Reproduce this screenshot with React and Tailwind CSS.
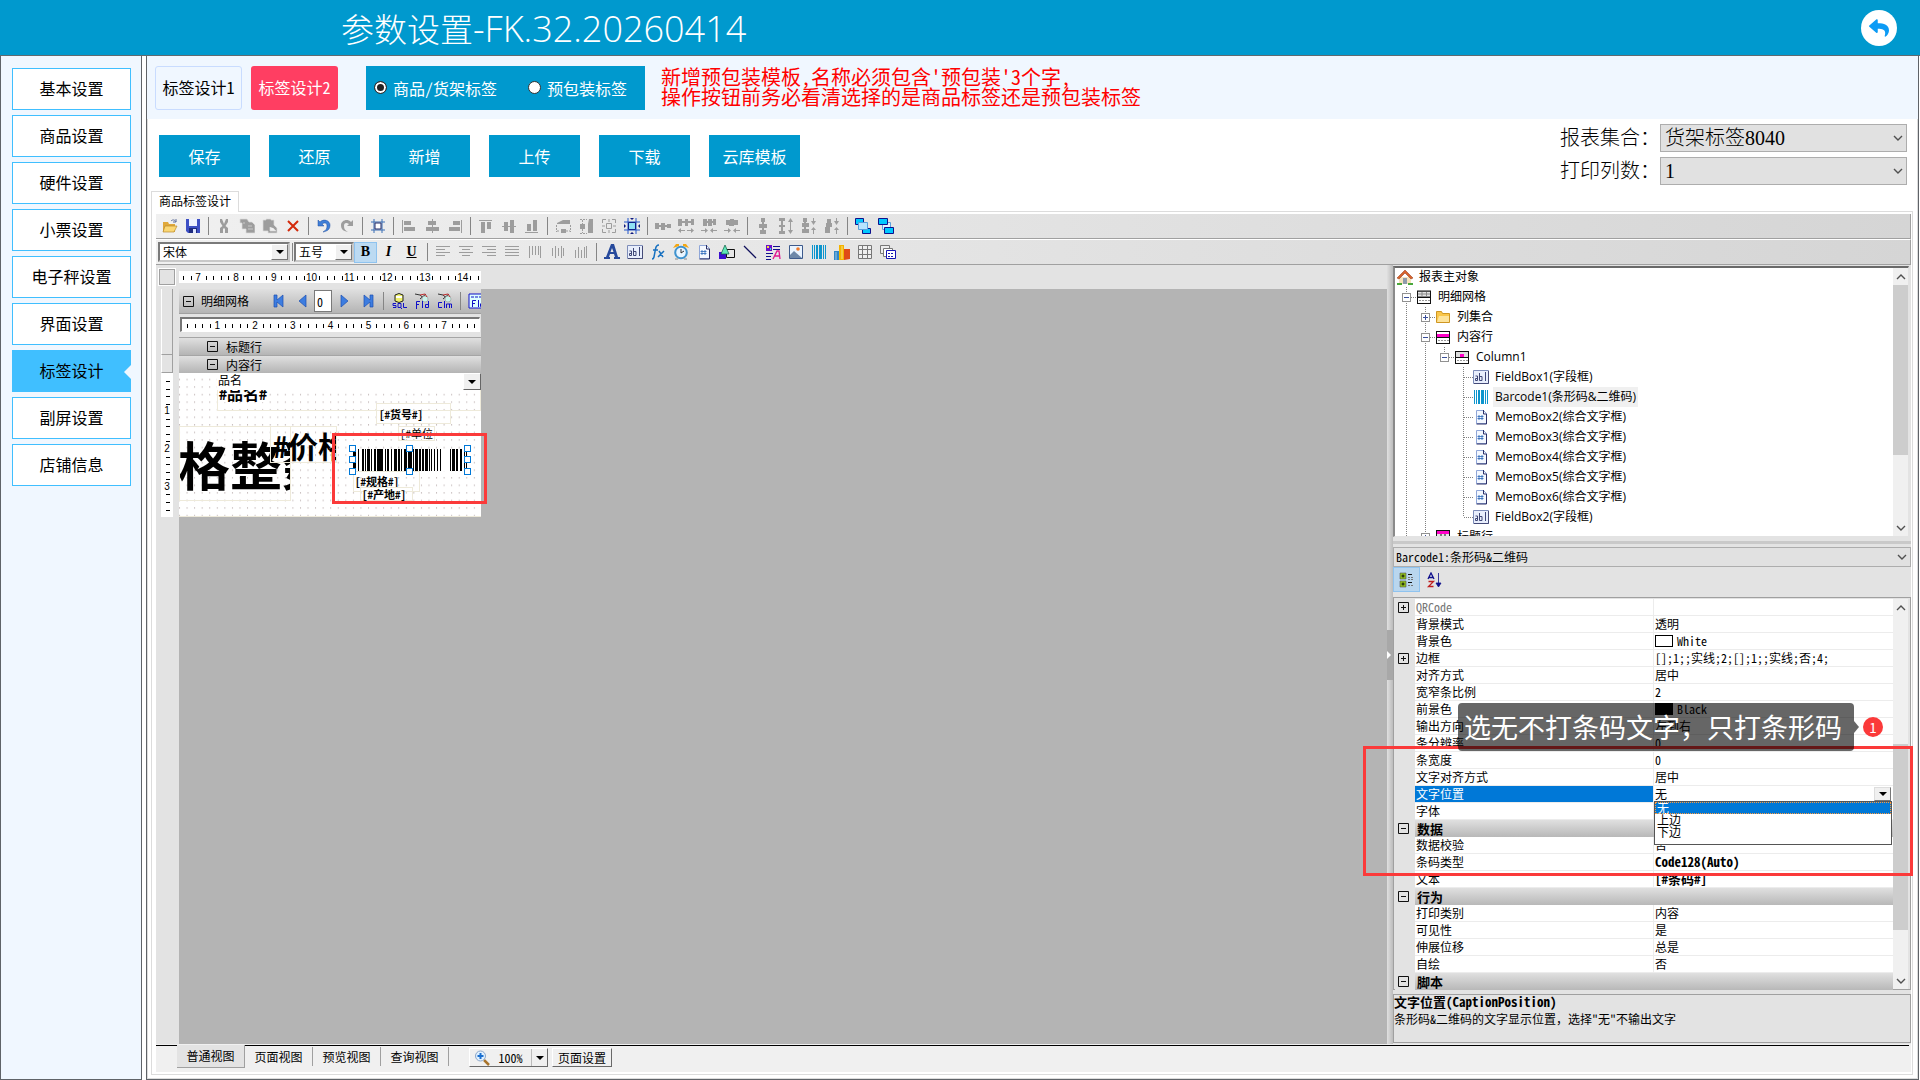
import React, { useState } from 'react';
import { FaReply } from 'react-icons/fa';

const menuItems = [
  '基本设置', '商品设置', '硬件设置', '小票设置', '电子秤设置',
  '界面设置', '标签设计', '副屏设置', '店铺信息',
];

const actions = ['保存', '还原', '新增', '上传', '下载', '云库模板'];

const G = '#9d9d9d';

// 工具栏图标，统一 16x16
const icons = {
  open: (
    <>
      <path d="M1 4h5l1 2h6v8H1z" fill="#e0a83a" />
      <path d="M3 8h12l-3 6H1z" fill="#fbd774" stroke="#b98a2e" strokeWidth=".7" />
      <path d="M9 3c2-2 4-1 5 1M14 1v3h-3" fill="none" stroke="#5f6f9c" />
    </>
  ),
  save: (
    <>
      <path d="M1 1h14v14H3l-2-2z" fill="#3d4fc4" />
      <path d="M4 1h8v7H4z" fill="#eef2ff" />
      <path d="M4 10h8v5H4z" fill="#1d2a7d" />
      <path d="M8 11h3v4H8z" fill="#dfe6ff" />
    </>
  ),
  cut: <path d="M4 1h2l2 5 2-5h2v3L9.500 8l2.500 2v5h-3v-4L8 10l-1 1v4H4v-5l2.500-2L4 4z" fill={G} />,
  copy: <path d="M1 1h7l2 3h3l3 3v8H7v-4H3V5H1zM5 4v2M9 8h4M9 11h5" fill={G} stroke="#ddd" strokeWidth=".7" />,
  paste: <path d="M1 2h3V1h5v1h3v5l3 3v5H6v-2H1zM8 9v4h6l-3-3" fill={G} stroke="#ddd" strokeWidth=".7" />,
  del: <path d="M3 3l10 10M13 3L3 13" stroke="#d42a0b" strokeWidth="2" fill="none" />,
  undo: <path d="M2 2v6h6L6 6c3-2 5-1 5 2s-1 4-4 6c5-1 7-3 7-7S8 0 4 4z" fill="#3f7fd8" stroke="#1d4fa0" strokeWidth=".5" />,
  redo: <path d="M14 2v6H8l2-2c-3-2-5-1-5 2s1 4 4 6c-5-1-7-3-7-7s6-7 10-3z" fill={G} />,
  grid: (
    <>
      <path d="M4 1v14M12 1v14M1 4h14M1 12h14" stroke="#3b6fb5" fill="none" />
      <path d="M5 5h6v6H5z" fill="#fff" stroke="#222a66" />
    </>
  ),
  alLeft: <path d="M1 2h1v13H1zM3 3h7v4H3zM3 9h11v4H3z" fill={G} />,
  alCenter: <path d="M8 1h1v14H8zM4 3h8v4H4zM2 9h13v4H2z" fill={G} />,
  alRight: <path d="M14 2h1v13h-1zM6 3h7v4H6zM2 9h11v4H2z" fill={G} />,
  alTop: <path d="M1 2h13v1H1zM3 4h4v11H3zM9 4h4v7H9z" fill={G} />,
  alMid: <path d="M1 8h14v1H1zM3 4h4v9H3zM9 2h4v13H9z" fill={G} />,
  alBottom: <path d="M1 14h13v1H1zM3 6h4v7H3zM9 2h4v11H9z" fill={G} />,
  sameW: (
    <>
      <path d="M2 5l6-3h7v4H2zM6 11h5v4H6z" fill={G} />
      <path d="M1.500 7v7M15.500 7v7M2 13h3M11 13h4" stroke={G} strokeDasharray="2 1" fill="none" />
    </>
  ),
  sameH: (
    <>
      <path d="M11 1h4v14h-5V6zM2 6h5v5H2z" fill={G} />
      <path d="M2 1.500h7M2 15.500h7M4.500 2v4M4.500 11v4" stroke={G} strokeDasharray="2 1" fill="none" />
    </>
  ),
  sameBoth: (
    <>
      <path d="M5.500 5.500h5v5h-5z" fill="none" stroke={G} />
      <path d="M5 1.500H1.500V5M11 1.500h3.500V5M1.500 11v3.500H5M14.500 11v3.500H11M8 1v3M8 12v3M1 8h3M12 8h3" stroke={G} fill="none" />
    </>
  ),
  fitGrid: (
    <>
      <path d="M4 0v16M12 0v16M0 4h16M0 12h16" stroke="#2456c9" fill="none" />
      <path d="M4.500 4.500h7v7h-7z" fill="#8fe0f5" stroke="#10208a" />
      <path d="M6 0h4L8 2zM6 16h4l-2-2zM0 6v4l2-2zM16 6v4l-2-2z" fill="#101a80" />
    </>
  ),
  hs1: <path d="M0 5h4v2h2V5h4v2h2V6h4v4h-4V9h-2v3H6V9H4v2H0z" fill={G} />,
  hs2: <path d="M0 1h4v2h3V1h3v2h3V1h3v6h-3V5h-3v3H7V5H4v3H0zM3 10v5l-3-2.500zM3 12h4v1H3zM13 10v5l3-2.500zM9 12h4v1H9z" fill={G} />,
  hs3: <path d="M2 1h4v2h1V1h4v2h1V1h3v6h-3V5h-1v3H7V5H6v3H2zM4 10v5l3-2.500zM0 12h4v1H0zM12 10v5l-3-2.500zM12 12h4v1h-4z" fill={G} />,
  hs4: <path d="M2 2h4V1h4v1h4v5h-4v1H5V7H2zM4 10v5l3-2.500zM0 12h4v1H0zM12 10v5l-3-2.500zM12 12h4v1h-4z" fill={G} />,
  vs1: <path d="M6 0h4v4H9v2h3v4H9v2h2v4H5v-4h2v-2H4V6h3V4H6z" fill={G} />,
  vs2: <path d="M1 0h6v3H5v4h2v2H5v4h2v3H1v-3h2V9H1V7h2V3H1zM10 4h5l-2.500-4zM12 4h1v4h-1zM10 12h5l-2.500 4zM12 8h1v4h-1z" fill={G} />,
  vs3: <path d="M2 0h4v4H5v1h3v4H5v2h3v4H1v-4h2V9H1V5h2V4H2zM10 3h5l-2.500 4zM12 0h1v4h-1zM10 12h5l-2.500-3zM12 12h1v4h-1z" fill={G} />,
  vs4: <path d="M3 1h4v4h1v4H6v6H1V9h1V5h1zM10 3h5l-2.500 4zM12 0h1v4h-1zM10 12h5l-2.500-3zM12 12h1v4h-1z" fill={G} />,
  front: (
    <>
      <path d="M.5 .5h8v6h-8zM7.500 10.500h8v5h-8z" fill="#00c8ff" stroke="#10108c" />
      <path d="M3.500 4.500h9v7h-9z" fill="#b8e4ff" stroke="#5aa0dd" />
    </>
  ),
  back: (
    <>
      <path d="M4.500 4.500h8v7h-8z" fill="#dff3ff" stroke="#5aa0dd" />
      <path d="M.5 .5h9v6h-9zM6.500 9.500h9v6h-9z" fill="#00c8ff" stroke="#10108c" />
    </>
  ),
  left: <path d="M1 2.500h14M1 5.500h9M1 8.500h14M1 11.500h9" stroke={G} fill="none" />,
  center: <path d="M1 2.500h14M4 5.500h8M1 8.500h14M4 11.500h8" stroke={G} fill="none" />,
  right: <path d="M1 2.500h14M6 5.500h9M1 8.500h14M6 11.500h9" stroke={G} fill="none" />,
  justify: <path d="M1 2.500h14M1 5.500h14M1 8.500h14M1 11.500h14" stroke={G} fill="none" />,
  vTop: <path d="M2.500 2v12M5.500 2v9M8.500 2v9M11.500 2v9M13.500 2v12" stroke={G} fill="none" />,
  vMid: <path d="M2.500 4v8M5.500 2v12M8.500 4v8M11.500 2v12M13.500 4v8" stroke={G} fill="none" />,
  vBot: <path d="M2.500 6v8M5.500 3v11M8.500 6v8M11.500 3v11M13.500 2v12" stroke={G} fill="none" />,
  letterA: <path d="M7 0h3l4 13h2v2h-6v-2h1l-1-3H6l-1 3h1v2H0v-2h2zM8 4L6.500 8h3z" fill="#274a9c" />,
  field: (
    <>
      <path d="M.5 1.500h15v13H.5z" fill="#e8eefc" stroke="#7d8cb8" />
      <path d="M1 14.500h14.500V2" stroke="#454b78" fill="none" />
      <path d="M2.500 7h2v4.500h-2v-2h2M6.500 4v7.500h2.500v-4H6.500M12.500 3v9" stroke="#3e4675" fill="none" />
    </>
  ),
  fx: <path d="M9 1c-2 0-3 1-3.500 4L4 13c-.3 1.500-1 2-2 2M3 6h5M9 7l4 6M14 7l-6 6" stroke="#1670c0" strokeWidth="1.500" fill="none" />,
  clock: (
    <>
      <path d="M0 4l3-4h3v2zM16 4l-3-4h-3v2z" fill="#f3a712" />
      <circle cx="8" cy="8.500" r="5.800" fill="#eaf5ff" stroke="#3f93cf" strokeWidth="2" />
      <path d="M8 5v4l3-2" stroke="#333" fill="none" />
      <path d="M2 15h3M11 15h3" stroke="#888" />
    </>
  ),
  memo: (
    <>
      <path d="M3.500 1.500h7l3 3v10h-10z" fill="#f4f8ff" stroke="#8fa6d8" />
      <path d="M10.500 1v4h3v10h-10" fill="none" stroke="#2a2f66" />
      <path d="M6 6v5M9 6v5M4.500 7.500h6M4.500 9.500h6" stroke="#2a66b8" strokeWidth=".8" fill="none" />
    </>
  ),
  shape: (
    <>
      <path d="M0 8h7v7H0z" fill="#3a10d0" />
      <path d="M7.500 5.500h8v8h-8z" fill="none" stroke="#111" />
      <path d="M6 1l4 9H2z" fill="#5fe8b8" stroke="#0a5c42" strokeWidth=".7" />
    </>
  ),
  line: <path d="M2 2l12 12" stroke="#10105c" strokeWidth="1.300" fill="none" />,
  rich: (
    <>
      <path d="M1 1h6v6H1z" fill="#6a10c8" />
      <path d="M2 2h2v2H2z" fill="#f5e13a" />
      <path d="M5 4h1v2H5z" fill="#2de0e0" />
      <path d="M8 2.500h7M8 5.500h7M1 9.500h7M1 12.500h5M1 15.500h5" stroke="#10108c" fill="none" />
      <path d="M8 15l4-8h2l1 8M10 12h5" stroke="#e01890" strokeWidth="1.300" fill="none" />
    </>
  ),
  picture: (
    <>
      <path d="M1.500 1.500h13v13h-13z" fill="#eaf4ff" stroke="#3d5a8c" />
      <circle cx="10" cy="5" r="1.800" fill="#f07a2c" />
      <path d="M2 11l4-4 8 7H2z" fill="#6d87a8" />
    </>
  ),
  barcode: <path d="M1 1h1v14H1zM3 1h1v14H3zM5 1h2v14H5zM8 1h3v14H8zM12 1h1v14h-1zM14 1h1v14h-1z" fill="#0d95cd" />,
  chart: (
    <>
      <path d="M0 7h5v9H0z" fill="#2f87c9" />
      <path d="M5 1h5v15H5z" fill="#f4b400" />
      <path d="M10 5h6v10l-6 1z" fill="#e04a16" />
      <path d="M2 8v8M8 2v13" stroke="#fff8" />
    </>
  ),
  table: <path d="M1.500 1.500h13v13h-13zM5.500 2v12M10.500 2v12M1 5.500h14M1 10.500h14" fill="#efefef" stroke="#777" />,
  sub: (
    <>
      <path d="M.5 1.500h9v8h-9z" fill="#eee" stroke="#777" />
      <path d="M3.500 4.500h9v8h-9z" fill="#fff" stroke="#777" />
      <path d="M6.500 6.500h9v8h-9z" fill="#fff" stroke="#1414b4" />
      <path d="M8 9.500h6M8 12.500h6" stroke="#1414b4" strokeDasharray="2 1" />
    </>
  ),
  first: <path d="M3 2h3v5l6-5v12L6 9v5H3z" fill="#3d7de0" stroke="#1c4fb0" strokeWidth=".7" />,
  prev: <path d="M12 2v12L5 8z" fill="#3d7de0" stroke="#1c4fb0" strokeWidth=".7" />,
  next: <path d="M4 2v12l7-6z" fill="#3d7de0" stroke="#1c4fb0" strokeWidth=".7" />,
  last: <path d="M13 2h-3v5L4 2v12l6-5v5h3z" fill="#3d7de0" stroke="#1c4fb0" strokeWidth=".7" />,
  sql: (
    <>
      <path d="M4 2q4-3 8 0v6q-4 3-8 0z" fill="#eef06a" stroke="#222" />
      <path d="M5 3h6v2H5z" fill="#fff" />
      <path d="M5 10.500H2v2h3v2H2M7 10.500h3v4H7zM9 14l2 2M12.500 10v4.500H16" stroke="#1010c8" fill="none" />
    </>
  ),
  fld: (
    <>
      <path d="M1 1l5 1 6 5M12 1L6 6" stroke="#333" fill="none" />
      <circle cx="11" cy="6" r="3" fill="#c9f2ea" stroke="#888" strokeWidth=".5" />
      <path d="M6 2l5-1 2 3" stroke="#c03030" fill="none" />
      <path d="M2.500 16V8.500H6M2 11.500h3M8.500 8v7M14.500 8v6.500h-3v-3h3" stroke="#1010c8" fill="none" />
    </>
  ),
  clm: (
    <>
      <path d="M1 1l5 1 6 5M12 1L6 6" stroke="#333" fill="none" />
      <circle cx="11" cy="6" r="3" fill="#c9f2ea" stroke="#888" strokeWidth=".5" />
      <path d="M6 2l5-1 2 3" stroke="#c03030" fill="none" />
      <path d="M5 9.500H1.500v5H5M7.500 8v7M9.500 15v-4h5v4M12.500 11v4" stroke="#1010c8" fill="none" />
    </>
  ),
  fldBox: (
    <>
      <path d="M1 1h15v14H1z" fill="#dff" stroke="#1010c8" />
      <path d="M3 4h12" stroke="#1010c8" strokeDasharray="3 1" />
      <path d="M4.500 14V7.500H8M4 10.500h3M10.500 7v7M15.500 7v6.500h-3v-3" stroke="#1010c8" fill="none" />
    </>
  ),
  house: (
    <>
      <path d="M2 8h12v7H2z" fill="#f6e3bd" />
      <path d="M0 9l8-8 8 8-2 1-6-6-6 6z" fill="#d8622c" stroke="#8c3510" strokeWidth=".5" />
      <path d="M6 9h4v6H6z" fill="#8f9bab" />
      <path d="M0 14h5v2H0zM11 14h5v2h-5z" fill="#49a83a" />
    </>
  ),
  detail: (
    <>
      <path d="M1.500 2.500h13v5h-13zM1 5h14M6 3v5M10.500 3v5" fill="#e4e4e4" stroke="#888" />
      <path d="M1 2h14M1 8.500h14M1 14.500h14M1.500 2v12M14.500 2v12" stroke="#111" fill="none" />
      <path d="M3 11.500h11" stroke="#999" strokeDasharray="2 1" />
    </>
  ),
  content: (
    <>
      <path d="M1 2h14v13H1z" fill="#fff" />
      <path d="M2 5h12v3H2z" fill="#ff00c8" />
      <path d="M1 2.500h14M1 8.500h14M1 14.500h14M1.500 2v12M14.500 2v12" stroke="#111" fill="none" />
      <path d="M3 11.500h11" stroke="#999" strokeDasharray="2 1" />
    </>
  ),
  header: (
    <>
      <path d="M1 2h14v13H1z" fill="#e4e4e4" />
      <path d="M2 2h12v3H2z" fill="#ff00c8" />
      <path d="M1 1.500h14M1 8.500h14M1 14.500h14M1.500 2v12M14.500 2v12M6 5v3M10 5v3" stroke="#111" fill="none" />
    </>
  ),
  column: (
    <>
      <path d="M1 2h14v13H1z" fill="#ddd" />
      <path d="M6 5h4v3H6z" fill="#ff00c8" />
      <path d="M2 9h12v5H2z" fill="#fff" />
      <path d="M1 2.500h14M1 8.500h14M1 14.500h14M1.500 2v12M14.500 2v12" stroke="#111" fill="none" />
      <path d="M3 11.500h11" stroke="#999" strokeDasharray="2 1" />
    </>
  ),
  folder: (
    <>
      <path d="M1.500 2.500h5l1 2h7v9h-13z" fill="#f9c64a" stroke="#cf9622" />
      <path d="M4 7h10v6H2z" fill="#fde39a" />
    </>
  ),
  category: (
    <>
      <path d="M1 1h6v6H1zM1 9h6v6H1z" fill="#8fbf1a" stroke="#555" strokeWidth=".6" />
      <path d="M2.500 4h3M4 2.500v3M2.500 12h3M4 10.500v3" stroke="#111" />
      <path d="M9 2.500h4M9 10.500h4" stroke="#111" />
      <path d="M9 5.500h5M9 7.500h5M9 13.500h5" stroke="#777" strokeDasharray="2 1" />
    </>
  ),
  sort: (
    <>
      <path d="M2 7l3-6 3 6M3 5.500h4" stroke="#10108c" strokeWidth="1.300" fill="none" />
      <path d="M2.500 9.500h5l-5 5h5" stroke="#c02020" strokeWidth="1.300" fill="none" />
      <path d="M12.500 1v12M10 11h5l-2.500 4z" stroke="#10108c" fill="#10108c" strokeWidth=".8" />
    </>
  ),
  zoom: (
    <>
      <path d="M10 10l5 5" stroke="#a8742c" strokeWidth="2.500" />
      <circle cx="6.500" cy="6" r="5" fill="#dff0ff" stroke="#8aa5c8" />
      <path d="M6.500 3v6M3.500 6h6" stroke="#1a6fd0" strokeWidth="2" />
    </>
  ),
};

const Icon = ({ name }) => (
  <svg viewBox="0 0 16 16" className="w-4 h-4 shrink-0" aria-hidden="true">{icons[name]}</svg>
);

const ToolButton = ({ name }) => (
  <button type="button" aria-label={name} className="w-[23px] h-6 shrink-0 flex items-center justify-center">
    <Icon name={name} />
  </button>
);

const Sep = () => (
  <span className="w-2 shrink-0 flex justify-center">
    <span className="w-px h-[18px] bg-[#858585]" />
  </span>
);

const toolbarTop = [
  ['open', 'save'],
  ['cut', 'copy', 'paste', 'del'],
  ['undo', 'redo'],
  ['grid'],
  ['alLeft', 'alCenter', 'alRight'],
  ['alTop', 'alMid', 'alBottom'],
  ['sameW', 'sameH', 'sameBoth', 'fitGrid'],
  ['hs1', 'hs2', 'hs3', 'hs4'],
  ['vs1', 'vs2', 'vs3', 'vs4'],
  ['front', 'back'],
];

const toolbarBottom = [
  ['left', 'center', 'right', 'justify', 'vTop', 'vMid', 'vBot'],
  ['letterA', 'field', 'fx', 'clock', 'memo', 'shape', 'line', 'rich', 'picture', 'barcode', 'chart', 'table', 'sub'],
];

const Caret = () => (
  <svg viewBox="0 0 8 4" className="w-2 h-1" aria-hidden="true"><path d="M0 0h8L4 4z" fill="#000" /></svg>
);

const Chevron = ({ up }) => (
  <svg viewBox="0 0 10 6" className="w-[10px] h-[6px]" aria-hidden="true">
    <path d={up ? 'M1 5l4-4 4 4' : 'M1 1l4 4 4-4'} fill="none" stroke="#505050" strokeWidth="1.400" />
  </svg>
);

// 老式下拉框（字体 / 字号）
const ClassicSelect = ({ label, value, width }) => (
  <div className={`${width} relative h-5 shrink-0`}>
    <select
      aria-label={label}
      defaultValue={value}
      className="appearance-none block w-full h-5 pl-[3px] bg-white border-2 border-[#7a7a7a] border-r-[#c8c8c8] border-b-[#c8c8c8] text-xs leading-4 outline-none"
    >
      <option>{value}</option>
    </select>
    <span className="absolute right-[2px] top-[2px] w-[17px] h-4 flex items-center justify-center bg-[#f0f0f0] border border-white border-r-[#777] border-b-[#777] pointer-events-none">
      <Caret />
    </span>
  </div>
);

const FlatSelect = ({ id, label, value }) => (
  <div className="flex items-center">
    <label htmlFor={id} className="w-[100px] whitespace-nowrap">{label}</label>
    <div className="relative w-[247px] h-7">
      <select id={id} defaultValue={value} className="appearance-none block w-full h-7 pl-1 bg-[#e1e1e1] border border-[#adadad] leading-6">
        <option>{value}</option>
      </select>
      <span className="absolute right-1 top-[11px] flex pointer-events-none"><Chevron /></span>
    </div>
  </div>
);

const STEP = 7.56;

// 刻度尺：每 5 格一个数字
const Ruler = ({ length, start, labelAt, firstNumber, vertical }) => {
  const marks = [];
  for (let i = 0; start + i * STEP < length - 2; i++) {
    const pos = start + i * STEP;
    const isLabel = i % 5 === labelAt;
    if (isLabel) {
      marks.push(
        <text key={i} x={vertical ? 6 : pos} y={vertical ? pos + 3 : 10} textAnchor="middle" fontSize="10" fontFamily="Liberation Sans, sans-serif">
          {firstNumber + (i - labelAt) / 5}
        </text>
      );
    } else if (vertical) {
      marks.push(<rect key={i} x="5" y={Math.round(pos)} width="4" height="1" />);
    } else {
      marks.push(<rect key={i} x={Math.round(pos)} y="5" width="1" height="4" />);
    }
  }
  return vertical
    ? <svg width="12" height={length} className="bg-white block">{marks}</svg>
    : <svg width={length} height="12" className="bg-white block">{marks}</svg>;
};

const MinusBox = () => (
  <svg viewBox="0 0 11 11" className="w-[11px] h-[11px] shrink-0" aria-hidden="true">
    <path d="M.5 .5h10v10H.5zM3 5.500h5" fill="none" stroke="#111" />
  </svg>
);

const PlusBox = () => (
  <svg viewBox="0 0 11 11" className="w-[11px] h-[11px] shrink-0" aria-hidden="true">
    <path d="M.5 .5h10v10H.5zM3 5.500h5M5.500 3v5" fill="none" stroke="#111" />
  </svg>
);

const bars = [
  [0, 3], [5, 1], [9, 2], [12, 1], [14, 3], [18, 1], [21, 2], [24, 3], [27, 3], [32, 1], [34, 2],
  [38, 1], [41, 3], [45, 2], [48, 1], [51, 3], [55, 4], [60, 1], [62, 3], [66, 2], [69, 2], [72, 3],
  [76, 1], [78, 1], [81, 1], [84, 1], [87, 1], [97, 1], [99, 3], [103, 2], [107, 2], [111, 1], [113, 1],
];

const handles = [0, 57, 115].flatMap((x) => [0, 11, 23].map((y) => [x, y])).filter(([x, y]) => !(x === 57 && y === 11));

const LabelCanvas = () => (
  <div className="relative h-36 w-[302px] bg-white border-b border-[#eeeada]">
    <svg className="absolute inset-0 w-full h-full" aria-hidden="true">
      <defs>
        <pattern id="dots" width={STEP} height={STEP} patternUnits="userSpaceOnUse">
          <rect x="0" y="6" width="1" height="1" fill="#a89898" />
        </pattern>
      </defs>
      <rect width="100%" height="100%" fill="url(#dots)" />
    </svg>
    <div className="absolute left-[38px] top-0 w-[246px] h-[17px] bg-white pl-px text-xs leading-[13px]">品名</div>
    <button type="button" aria-label="展开" className="absolute right-0 top-0 w-[18px] h-[17px] flex items-center justify-center bg-[#f0f0f0] border border-white border-r-[#666] border-b-[#666]">
      <Caret />
    </button>
    <div className="absolute left-[38px] top-[17px] w-[264px] h-[21px] overflow-hidden border border-t-0 border-[#eeeada]">
      <div className="h-3 overflow-hidden flex items-end">
        <span className="bg-white pl-px text-base leading-[18px] font-bold">#品名#</span>
      </div>
    </div>
    <div className="absolute left-[197px] top-[30px] w-[75px] h-[21px] border border-[#eeeada] pl-[2px] text-[11px] leading-5 font-bold whitespace-nowrap">[#货号#]</div>
    <div className="absolute left-[219px] top-[53px] w-[37px] h-[15px] border border-[#eeeada] pl-px text-[11px] leading-3 whitespace-nowrap overflow-hidden">[#单位</div>
    <div className="absolute left-0 top-[53px] w-28 h-[75px] border border-[#eeeada] flex items-center overflow-hidden">
      <span className="-ml-[2px] text-[52px] leading-[72px] font-bold whitespace-nowrap">格整数</span>
    </div>
    <div className="absolute left-[91px] top-[53px] w-[67px] h-[37px] border border-[#eeeada] pl-[2px] text-[30px] leading-9 font-bold whitespace-nowrap overflow-hidden">#价格</div>
    <div className="absolute left-[174px] top-[98px] w-[67px] h-[21px] border border-[#eeeada] pl-px text-[11px] leading-[18px] font-bold whitespace-nowrap">[#规格#]</div>
    <div className="absolute left-[181px] top-[114px] w-[53px] h-[14px] border border-[#eeeada] pl-px text-[11px] leading-3 font-bold whitespace-nowrap">[#产地#]</div>
    <svg viewBox="0 0 122 30" className="absolute left-[170px] top-[72px] w-[122px] h-[30px]" aria-hidden="true">
      <rect x="4" y="4" width="114" height="22" fill="#fff" />
      {bars.map(([x, w]) => <rect key={x} x={x + 4} y="4" width={w} height="22" />)}
      {handles.map(([x, y]) => (
        <rect key={`${x}-${y}`} x={x + 0.5} y={y + 0.5} width="6" height="6" fill="#fff" stroke="#0078d7" />
      ))}
    </svg>
    <div className="absolute left-[153px] top-[60px] w-[155px] h-[71px] border-[3px] border-[#fb3a3a]" />
  </div>
);

const band = 'h-[18px] flex items-center pl-7 gap-2 text-xs leading-4 bg-linear-to-b from-[#e0e0e0] to-[#b4b4b4] border-t border-[#a5a5a5]';

const Designer = () => (
  <section className="flex-1 min-w-0 flex flex-col bg-[#b4b4b4]">
    <div className="h-6 bg-[#e3e3e3] pl-[3px] flex gap-1">
      <div className="w-4 h-4 mt-1 border border-[#a0a0a0] outline outline-white" />
      <div className="pt-[6px]"><Ruler length={302} start={4} labelAt={2} firstNumber={7} /></div>
    </div>
    <div className="flex-1 flex">
      <div className="w-[23px] shrink-0 bg-[#e3e3e3] pl-[5px]">
        <div className="w-3 h-[66px] border-r border-b border-[#a0a0a0] border-l border-l-white" />
        <div className="w-3 h-[18px] border-r border-b border-[#a0a0a0] border-l border-l-white" />
        <Ruler vertical length={144} start={8} labelAt={4} firstNumber={1} />
      </div>
      <div className="w-[302px] shrink-0">
        <div className="h-[25px] flex items-center bg-linear-to-b from-[#e0e0e0] to-[#b4b4b4] border-b border-[#a0a0a0] overflow-hidden">
          <span className="pl-1 flex items-center gap-[7px] text-xs w-[88px] shrink-0"><MinusBox />明细网格</span>
          <ToolButton name="first" />
          <ToolButton name="prev" />
          <input aria-label="页码" defaultValue="0" className="w-[18px] h-[22px] mx-px shrink-0 border border-[#7a7a7a] bg-white pl-[2px] text-xs" />
          <ToolButton name="next" />
          <ToolButton name="last" />
          <Sep />
          <ToolButton name="sql" />
          <ToolButton name="fld" />
          <ToolButton name="clm" />
          <Sep />
          <ToolButton name="fldBox" />
        </div>
        <div className="h-[23px] bg-[#e3e3e3] pt-[3px] px-px">
          <div className="h-[15px] border border-white border-t-2 border-t-[#777] border-l-2 border-l-[#777] bg-white overflow-hidden">
            <Ruler length={298} start={5} labelAt={4} firstNumber={1} />
          </div>
        </div>
        <div className={band}><MinusBox />标题行</div>
        <div className={band}><MinusBox />内容行</div>
        <LabelCanvas />
      </div>
    </div>
  </section>
);

// cells 描述每一级的连线
const tree = [
  { cells: [], icon: 'house', text: '报表主对象' },
  { cells: ['minus'], icon: 'detail', text: '明细网格' },
  { cells: ['line', 'plus'], icon: 'folder', text: '列集合' },
  { cells: ['line', 'minus'], icon: 'content', text: '内容行' },
  { cells: ['line', 'line', 'last'], icon: 'column', text: 'Column1' },
  { cells: ['line', 'line', 'none', 'tee'], icon: 'field', text: 'FieldBox1(字段框)' },
  { cells: ['line', 'line', 'none', 'tee'], icon: 'barcode', text: 'Barcode1(条形码&二维码)', selected: true },
  { cells: ['line', 'line', 'none', 'tee'], icon: 'memo', text: 'MemoBox2(综合文字框)' },
  { cells: ['line', 'line', 'none', 'tee'], icon: 'memo', text: 'MemoBox3(综合文字框)' },
  { cells: ['line', 'line', 'none', 'tee'], icon: 'memo', text: 'MemoBox4(综合文字框)' },
  { cells: ['line', 'line', 'none', 'tee'], icon: 'memo', text: 'MemoBox5(综合文字框)' },
  { cells: ['line', 'line', 'none', 'tee'], icon: 'memo', text: 'MemoBox6(综合文字框)' },
  { cells: ['line', 'line', 'none', 'end'], icon: 'field', text: 'FieldBox2(字段框)' },
  { cells: ['line', 'plus'], icon: 'header', text: '标题行' },
];

const TreeCell = ({ type }) => {
  const dash = { stroke: '#808080', strokeDasharray: '1 1' };
  const box = type === 'plus' || type === 'minus' || type === 'last';
  return (
    <svg viewBox="0 0 19 20" className="w-[19px] h-5 shrink-0" aria-hidden="true">
      {type !== 'none' && <path d={type === 'end' || type === 'last' ? 'M9.500 0v10' : 'M9.500 0v20'} {...dash} />}
      {type !== 'none' && type !== 'line' && <path d="M10 10.500h9" {...dash} />}
      {box && <rect x="5.500" y="6.500" width="8" height="8" fill="#fff" stroke="#919191" />}
      {box && <path d={type === 'plus' ? 'M7 10.500h5M9.500 8v5' : 'M7 10.500h5'} stroke="#3a4f9a" fill="none" />}
    </svg>
  );
};

const ScrollBar = ({ thumb }) => (
  <div className="w-[15px] shrink-0 bg-[#f0f0f0] flex flex-col items-center">
    <span className="h-[17px] flex items-center"><Chevron up /></span>
    <div className="flex-1 w-full"><div className={`${thumb} w-full bg-[#cdcdcd]`} /></div>
    <span className="h-[17px] flex items-center"><Chevron /></span>
  </div>
);

const ObjectTree = () => (
  <div className="h-[271px] flex bg-white border border-t-2 border-l-2 border-[#e3e3e3] border-t-[#696969] border-l-[#8a8a8a] mr-[2px] overflow-hidden">
    <ul className="flex-1 -mt-px pl-[2px] text-xs font-['Open_Sans','Noto_Sans_CJK_SC',sans-serif]">
      {tree.map((node) => (
        <li key={node.text} className="h-5 flex items-center whitespace-nowrap">
          {node.cells.map((type, i) => <TreeCell key={i} type={type} />)}
          <Icon name={node.icon} />
          <span className={`ml-1 px-[2px] leading-5 ${node.selected ? 'bg-[#f0f0f0]' : ''}`}>{node.text}</span>
        </li>
      ))}
    </ul>
    <ScrollBar thumb="h-[170px]" />
  </div>
);

const props = [
  { name: 'QRCode', value: '', expand: true, muted: true },
  { name: '背景模式', value: '透明' },
  { name: '背景色', value: 'White', swatch: 'bg-white' },
  { name: '边框', value: '[];1;;实线;2;[];1;;实线;否;4;', expand: true },
  { name: '对齐方式', value: '居中' },
  { name: '宽窄条比例', value: '2' },
  { name: '前景色', value: 'Black', swatch: 'bg-black' },
  { name: '输出方向', value: '左到右' },
  { name: '条分辨率', value: '0' },
  { name: '条宽度', value: '0' },
  { name: '文字对齐方式', value: '居中' },
  { name: '文字位置', value: '无', active: true },
  { name: '字体', value: '' },
  { name: '数据', group: true },
  { name: '数据校验', value: '否' },
  { name: '条码类型', value: 'Code128(Auto)', bold: true },
  { name: '文本', value: '[#条码#]', bold: true },
  { name: '行为', group: true },
  { name: '打印类别', value: '内容' },
  { name: '可见性', value: '是' },
  { name: '伸展位移', value: '总是' },
  { name: '自绘', value: '否' },
  { name: '脚本', group: true },
];

const PropertyRow = ({ row }) => {
  if (row.group) {
    return (
      <tr>
        <td className="h-[17px] p-0 pl-[3px] bg-[#e3e3e3]"><MinusBox /></td>
        <th colSpan={2} className="h-[17px] p-0 pl-[2px] text-left text-[13px] leading-4 font-bold bg-linear-to-b from-[#e0e0e0] to-[#b8b8b8]">{row.name}</th>
      </tr>
    );
  }
  return (
    <tr>
      <td className="h-[17px] p-0 pl-[3px] bg-[#e3e3e3]">{row.expand && <PlusBox />}</td>
      <th className={`h-[17px] p-0 pl-px text-left font-normal border-b border-r border-[#ececec] ${row.active ? 'bg-[#0078d7] text-white' : 'bg-white'} ${row.muted ? 'text-[#777]' : ''}`}>
        {row.name}
      </th>
      <td className={`h-[17px] p-0 pl-px bg-white border-b border-[#ececec] ${row.bold ? 'font-bold text-[13px]' : ''}`}>
        {row.active ? (
          <span className="flex h-4 items-center">
            <select aria-label={row.name} defaultValue={row.value} className="appearance-none flex-1 h-4 outline-none">
              <option>无</option>
              <option>上边</option>
              <option>下边</option>
            </select>
            <span className="w-[17px] h-[14px] mr-[2px] flex items-center justify-center bg-[#f0f0f0] border border-r-[#777] border-b-[#777] border-[#ddd]"><Caret /></span>
          </span>
        ) : (
          <span className="flex items-center gap-1">
            {row.swatch && <span className={`${row.swatch} w-[18px] h-3 border border-black`} />}
            {row.value}
          </span>
        )}
      </td>
    </tr>
  );
};

const Inspector = () => (
  <aside className="w-[524px] shrink-0 flex bg-[#e3e3e3]">
    <div className="w-[6px] shrink-0 flex items-center bg-linear-to-r from-[#e0e0e0] to-[#bcbcbc]">
      <div className="w-full h-[50px] flex items-center bg-[#a8a8a8]">
        <svg viewBox="0 0 4 8" className="w-1 h-2" aria-hidden="true"><path d="M0 0l4 4-4 4z" fill="#fff" /></svg>
      </div>
    </div>
    <div className="flex-1 min-w-0 pt-px">
      <ObjectTree />
      <div className="h-[10px] pt-1"><div className="h-[3px] bg-[#c9c9c9]" /></div>
      <div className="relative">
        <select aria-label="当前对象" defaultValue="b1" className="appearance-none block w-full h-5 pl-[2px] bg-[#e1e1e1] border border-[#adadad] text-xs leading-4">
          <option value="b1">Barcode1:条形码&amp;二维码</option>
        </select>
        <span className="absolute right-1 top-[7px] flex pointer-events-none"><Chevron /></span>
      </div>
      <div className="h-[30px] flex">
        <button type="button" aria-label="按分类" className="w-[27px] h-[25px] flex items-center justify-center bg-[#b9d6ee] border border-[#8fc3ef]"><Icon name="category" /></button>
        <button type="button" aria-label="按字母" className="w-[27px] h-[25px] flex items-center justify-center"><Icon name="sort" /></button>
      </div>

      <div className="relative border border-[#a0a0a0] h-[393px] pt-px pl-px pr-[2px] flex">
        <table className="flex-1 table-fixed border-separate border-spacing-0 text-xs leading-4 self-start">
          <colgroup>
            <col className="w-5" />
            <col className="w-[239px]" />
            <col />
          </colgroup>
          <tbody>
            {props.map((row) => <PropertyRow key={row.name} row={row} />)}
          </tbody>
        </table>
        <ScrollBar thumb="mt-32 h-[186px]" />

        <ul className="absolute left-[260px] top-[203px] w-[238px] h-11 bg-white border border-[#555] text-xs leading-3">
          <li className="h-3 pl-[2px] bg-[#0078d7] text-white outline-1 -outline-offset-1 outline-dotted outline-[#ff9a3c]">无</li>
          <li className="h-3 pl-[2px]">上边</li>
          <li className="h-3 pl-[2px]">下边</li>
        </ul>
        <div className="absolute -left-[31px] top-[148px] w-[550px] h-[130px] border-[3px] border-[#fb3a3a]" />
        <div className="absolute left-[64px] top-[105px] w-[396px] h-12 rounded bg-black/60 flex items-center pl-[6px] text-[27px] text-white whitespace-nowrap">
          选无不打条码文字，只打条形码
          <svg viewBox="0 0 5 12" className="absolute -right-[5px] top-[18px] w-[5px] h-3" aria-hidden="true"><path d="M0 0l5 6-5 6z" fill="#666" /></svg>
        </div>
        <span className="absolute left-[469px] top-[119px] w-5 h-5 rounded-full bg-[#fb3a3a] text-white text-sm leading-5 text-center">1</span>
      </div>

      <div className="mt-1 h-[49px] border border-[#a0a0a0] text-xs">
        <div className="text-[13px] leading-[14px] font-bold">文字位置(CaptionPosition)</div>
        <div className="leading-5">条形码&amp;二维码的文字显示位置，选择"无"不输出文字</div>
      </div>
    </div>
  </aside>
);

const views = ['普通视图', '页面视图', '预览视图', '查询视图'];

export default function App() {
  const [active, setActive] = useState('标签设计');
  const [kind, setKind] = useState('goods');

  return (
    <div className="min-h-screen flex flex-col bg-white text-black font-['Noto_Sans_Mono_CJK_SC','Noto_Sans_CJK_SC',sans-serif]">
      <header className="h-14 shrink-0 flex items-center justify-between pl-[341px] pr-[23px] bg-[#0099ce] border-b border-[#5f6a70] text-white">
        <h1 className="pt-1 text-[33px] leading-[44px] font-light font-['Open_Sans','Noto_Sans_CJK_SC',sans-serif]">
          参数设置<span className="text-4xl">-FK.32.20260414</span>
        </h1>
        <button type="button" aria-label="返回" className="w-9 h-9 rounded-full bg-white flex items-center justify-center text-[#0c9bf5]">
          <FaReply className="w-5 h-5" />
        </button>
      </header>

      <div className="flex-1 flex gap-1">
        <nav className="w-[142px] shrink-0 flex flex-col gap-[5px] pt-3 pl-[11px] bg-[#f0f7ff] border border-t-0 border-[#5f6368]">
          {menuItems.map((item) => (
            <button
              key={item}
              type="button"
              onClick={() => setActive(item)}
              className={`relative w-[119px] h-[42px] border border-[#40bfff] pb-[2px] text-base ${active === item ? 'bg-[#40bfff]' : 'bg-white'}`}
            >
              {item}
              {active === item && (
                <svg viewBox="0 0 7 14" className="absolute -right-px top-[14px] w-[7px] h-[14px]" aria-hidden="true"><path d="M7 0v14L0 7z" fill="#f0f7ff" /></svg>
              )}
            </button>
          ))}
        </nav>

        <main className="flex-1 min-w-0 mr-px flex flex-col border border-t-0 border-[#5f6368] bg-white">
          <div className="h-[63px] shrink-0 flex items-center pl-2 bg-[#f0f7ff]">
            <button type="button" className="w-[87px] h-11 pb-[2px] rounded-[3px] border border-[#c9dcff]">标签设计1</button>
            <button type="button" className="ml-[9px] w-[87px] h-11 pb-[2px] rounded-[3px] bg-[#ff3e62] text-white">标签设计2</button>
            <div className="ml-7 w-[279px] h-11 flex items-center gap-[31px] pl-2 bg-[#0099ce] text-white whitespace-nowrap">
              <label className="flex items-center gap-[6px]">
                <input type="radio" name="kind" checked={kind === 'goods'} onChange={() => setKind('goods')} className="appearance-none w-[13px] h-[13px] rounded-full border border-[#333] bg-white checked:bg-[#222] checked:shadow-[inset_0_0_0_2px_#fff]" />
                商品/货架标签
              </label>
              <label className="flex items-center gap-[6px]">
                <input type="radio" name="kind" checked={kind === 'packed'} onChange={() => setKind('packed')} className="appearance-none w-[13px] h-[13px] rounded-full border border-[#333] bg-white checked:bg-[#222] checked:shadow-[inset_0_0_0_2px_#fff]" />
                预包装标签
              </label>
            </div>
            <p className="ml-4 pb-[2px] text-xl leading-5 text-[#ff0000]">
              新增预包装模板,名称必须包含'预包装'3个字,<br />
              操作按钮前务必看清选择的是商品标签还是预包装标签
            </p>
          </div>

          <div className="flex-1 flex flex-col pl-[3px] pr-1 pb-[3px] border-x border-b border-[#dcdcdc]">
            <div className="h-[72px] shrink-0 flex justify-between pl-2 pr-[6px]">
              <div className="flex gap-[19px] pt-4">
                {actions.map((text) => (
                  <button key={text} type="button" className="w-[91px] h-[42px] bg-[#0099ce] text-white">{text}</button>
                ))}
              </div>
              <div className="pt-[5px] flex flex-col gap-[5px] text-xl leading-7 font-['Liberation_Serif','Noto_Sans_CJK_SC',serif] font-light">
                <FlatSelect id="report" label="报表集合：" value="货架标签8040" />
                <FlatSelect id="cols" label="打印列数：" value="1" />
              </div>
            </div>

            <div className="self-start w-[88px] h-[21px] -mb-px relative bg-white border border-b-0 border-[#dcdcdc] text-xs leading-[18px] text-center">商品标签设计</div>

            <div className="flex-1 flex flex-col border border-[#dcdcdc] pt-[2px] pl-1 pr-px pb-[2px]">
              <div className="h-[25px] shrink-0 flex items-center pl-[2px] bg-linear-to-r from-[#f0f0f0] to-[#d5d5d5] border-b border-r border-[#a0a0a0]">
                {toolbarTop.map((group, i) => (
                  <React.Fragment key={group[0]}>
                    {i > 0 && <Sep />}
                    {group.map((name) => <ToolButton key={name} name={name} />)}
                  </React.Fragment>
                ))}
              </div>
              <div className="h-[26px] shrink-0 flex items-center pl-[2px] bg-linear-to-r from-[#f0f0f0] to-[#d5d5d5] border-b border-r border-t border-[#a0a0a0] border-t-white">
                <ClassicSelect label="字体" value="宋体" width="w-[132px]" />
                <span className="w-1 h-[18px] border-r border-[#858585] mr-px -ml-px" />
                <ClassicSelect label="字号" value="五号" width="w-[60px]" />
                <button type="button" className="w-[23px] h-[21px] bg-[#bcdaf2] border border-[#8fc3ef] font-['Liberation_Serif',serif] text-sm leading-4 font-bold">B</button>
                <button type="button" className="w-[23px] h-[21px] font-['Liberation_Serif',serif] text-sm leading-4 font-bold italic">I</button>
                <button type="button" className="w-[23px] h-[21px] font-['Liberation_Serif',serif] text-sm leading-4 font-bold underline">U</button>
                {toolbarBottom.map((group) => (
                  <React.Fragment key={group[0]}>
                    <Sep />
                    {group.map((name) => <ToolButton key={name} name={name} />)}
                  </React.Fragment>
                ))}
              </div>

              <div className="flex-1 flex">
                <Designer />
                <Inspector />
              </div>

              <div className="h-7 shrink-0 pt-px bg-[#f0f0f0] text-xs">
                <div className="flex items-start border-t border-black pl-[21px] mr-[2px]">
                  {views.map((view, i) => (
                    <button
                      key={view}
                      type="button"
                      className={i === 0
                        ? 'w-[68px] h-[23px] -mt-px bg-[#e3e3e3] border-r border-b border-[#a0a0a0]'
                        : 'w-[68px] h-[19px] mt-px border-r border-[#a0a0a0]'}
                    >
                      {view}
                    </button>
                  ))}
                  <div className="ml-5 mt-[2px] w-[79px] h-[19px] flex items-center border border-white border-r-[#696969] border-b-[#696969] pl-1">
                    <Icon name="zoom" />
                    <span className="flex-1 text-center">100%</span>
                    <button type="button" aria-label="缩放比例" className="w-4 h-[17px] flex items-center justify-center border-l border-[#bbb]"><Caret /></button>
                  </div>
                  <button type="button" className="ml-1 mt-[2px] w-[60px] h-[19px] border border-white border-r-[#696969] border-b-[#696969] leading-4">页面设置</button>
                </div>
              </div>
            </div>
          </div>
        </main>
      </div>
    </div>
  );
}
